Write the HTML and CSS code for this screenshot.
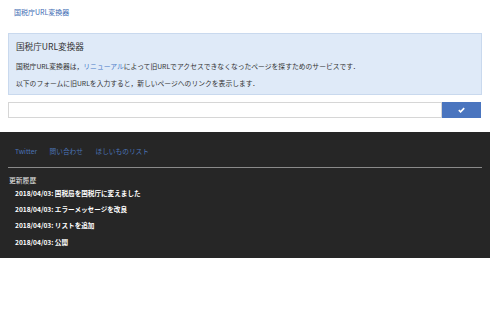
FILE: index.html
```html
<!DOCTYPE html>
<html lang="ja">
<head>
<meta charset="utf-8">
<title>国税庁URL変換器</title>
<link rel="stylesheet" href="styles.css">
</head>
<body>
<div class="main">
  <header class="topbar"><a class="brand" href="#">国税庁URL変換器</a></header>
  <section class="info">
    <h1 class="info-title">国税庁URL変換器</h1>
    <p class="info-text">国税庁URL変換器は，<a class="link" href="#">リニューアル</a>によって旧URLでアクセスできなくなったページを探すためのサービスです．</p>
    <p class="info-text">以下のフォームに旧URLを入力すると，新しいページへのリンクを表示します．</p>
  </section>
  <form class="form">
    <input class="url-input" type="text">
    <button class="submit" type="button"><svg width="7" height="6" viewBox="0 0 7 6"><path d="M0.8 3.2 L2.6 4.9 L6.2 1.1" fill="none" stroke="#fff" stroke-width="1.6"/></svg></button>
  </form>
</div>
<footer class="footer">
  <nav class="nav">
    <a href="#">Twitter</a>
    <a href="#">問い合わせ</a>
    <a href="#">ほしいものリスト</a>
  </nav>
  <hr class="rule">
  <div class="history-title">更新履歴</div>
  <ul class="history">
    <li>2018/04/03: 国税局を国税庁に変えました</li>
    <li>2018/04/03: エラーメッセージを改良</li>
    <li>2018/04/03: リストを追加</li>
    <li>2018/04/03: 公開</li>
  </ul>
</footer>
</body>
</html>
```
FILE: styles.css
```css
* { box-sizing: border-box; }
html, body { margin: 0; padding: 0; background: #fff; }
body {
  font-family: "Noto Sans CJK JP", "Noto Sans", sans-serif;
  color: #333;
  font-size: 6.8px;
}
a { text-decoration: none; }
.main { padding: 0 8px 14px 8px; }
.topbar { height: 33px; padding: 7px 0 0 6px; }
.brand { color: #3d6bb3; font-size: 7px; line-height: 10px; display: block; }
.info {
  background: #dfeaf8;
  border: 1px solid #c9d9ee;
  padding: 6px 7px 5px 7px;
  height: 62px;
}
.info-title { margin: 0; font-weight: normal; font-size: 8.6px; line-height: 13px; color: #333; }
.info-text { margin: 8px 0 0 0; font-size: 6.8px; line-height: 11px; color: #333; }
.info-text + .info-text { margin-top: 6px; }
.link { color: #4a7bc8; }
.form { display: flex; margin-top: 7px; height: 16px; }
.url-input {
  flex: 1;
  height: 16px;
  border: 1px solid #d6d6d6;
  background: #fff;
  margin: 0;
  padding: 0 4px;
}
.submit {
  width: 39px;
  height: 16px;
  background: #4a75bf;
  border: none;
  margin: 0 1px 0 0;
  padding: 0;
  display: flex;
  align-items: center;
  justify-content: center;
}
.footer {
  background: #262626;
  height: 126px;
  padding: 14px 8px 0 8px;
}
.nav { display: flex; gap: 12.5px; padding-left: 7px; height: 10px; }
.nav a { color: #4b74b8; font-size: 6.7px; line-height: 10px; }
.rule { margin: 11px 0 0 0; border: none; border-top: 1px solid #8a8a8a; height: 0; }
.history-title { color: #e8e8e8; font-size: 6.8px; line-height: 10px; margin-top: 7px; padding-left: 1px; }
.history { list-style: none; margin: 3px 0 0 0; padding: 0 0 0 7px; }
.history li { color: #fff; font-weight: bold; font-size: 6.6px; line-height: 10px; margin-bottom: 6.2px; }
```
